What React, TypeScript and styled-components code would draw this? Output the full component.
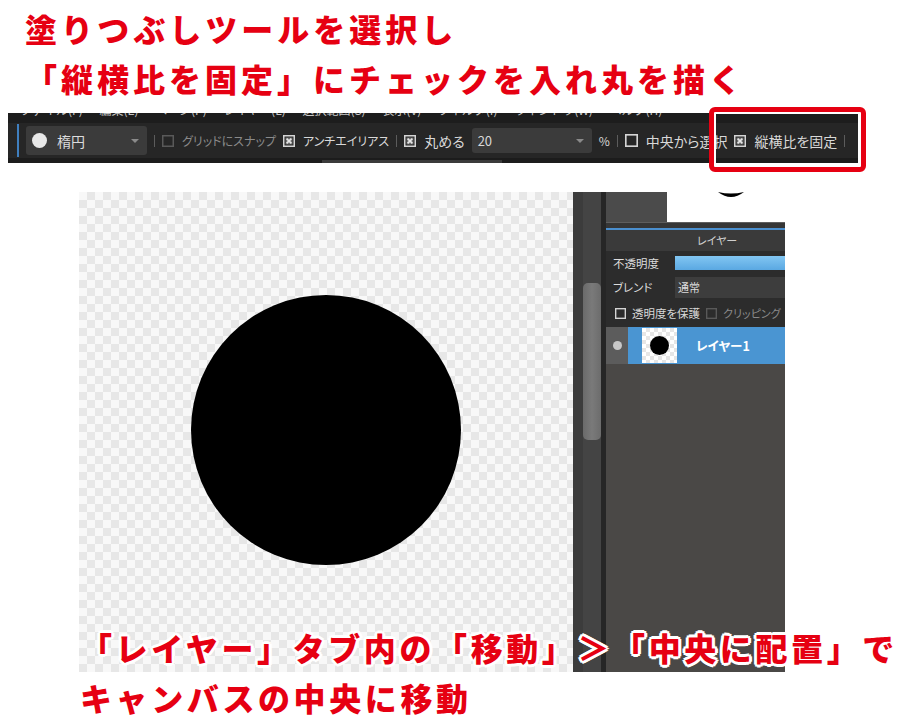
import React from "react";
import styled, { createGlobalStyle } from "styled-components";

const RED = "#e60012";
const UI_FONT = `"Noto Sans CJK JP", "Noto Sans", sans-serif`;

const Global = createGlobalStyle`
  html, body { margin: 0; padding: 0; background: #fff; }
  body { width: 900px; height: 728px; overflow: hidden; font-family: ${UI_FONT}; }
`;

const Page = styled.div`
  position: relative;
  width: 900px;
  height: 728px;
  background: #fff;
  overflow: hidden;
`;

const whiteOutline = `
  text-shadow:
    3px 0 #fff, -3px 0 #fff, 0 3px #fff, 0 -3px #fff,
    2px 2px #fff, -2px -2px #fff, 2px -2px #fff, -2px 2px #fff;
`;

const Heading = styled.div`
  padding: 3px 0 0 25px;
  color: ${RED};
  font-family: ${UI_FONT};
  font-weight: 900;
  font-size: 32px;
  line-height: 50px;
  letter-spacing: 4px;
  white-space: nowrap;
  ${whiteOutline}
`;

const Caption = styled(Heading)`
  position: absolute;
  left: 80px;
  top: 622px;
  padding: 0;
  font-size: 32px;
  letter-spacing: 3.6px;
  line-height: 50px;
`;

/* ---------- toolbar ---------- */

const Toolbar = styled.div`
  margin: 10px 0 0 8px;
  width: 850px;
  height: 50px;
  display: flex;
  flex-direction: column;
  background: #262626;
`;

const MenuStrip = styled.div`
  height: 10px;
  background: #1d1d1d;
  overflow: hidden;
  padding-left: 12px;
`;

const MenuText = styled.div`
  margin-top: -9px;
  font-size: 12px;
  line-height: 12px;
  color: #c8c8c8;
  white-space: nowrap;
  word-spacing: 14px;
`;

const ToolRow = styled.div`
  height: 35px;
  display: flex;
  align-items: center;
  gap: 7px;
  padding-left: 9px;
  font-family: ${UI_FONT};
  font-feature-settings: "palt";
  overflow: hidden;
`;

const BottomStrip = styled.div`
  height: 5px;
  background: #1c1c1c;
  display: flex;
  align-items: flex-end;
`;

const StripThumb = styled.div`
  margin-left: 314px;
  width: 180px;
  height: 3px;
  background: #3b3b3b;
`;

const Accent = styled.div`
  flex: none;
  width: 2px;
  height: 33px;
  background: #3f7fbf;
`;

const Dropdown = styled.div<{ $w: number; $h: number }>`
  flex: none;
  width: ${(p) => p.$w}px;
  height: ${(p) => p.$h}px;
  box-sizing: border-box;
  background: #3b3b3b;
  border-radius: 3px;
  display: flex;
  align-items: center;
  gap: 10px;
  padding: 0 8px 0 6px;
  color: #dcdcdc;
  font-size: 14px;
`;

const Caret = styled.span`
  margin-left: auto;
  width: 0;
  height: 0;
  border-left: 4px solid transparent;
  border-right: 4px solid transparent;
  border-top: 4px solid #8a8a8a;
`;

const WhiteDot = styled.span`
  width: 15px;
  height: 15px;
  border-radius: 50%;
  background: #e8e8e8;
`;

const Sep = styled.span`
  flex: none;
  width: 1px;
  height: 12px;
  background: #5c5c5c;
`;

const Group = styled.div`
  flex: none;
  display: flex;
  align-items: center;
  gap: 8px;
`;

const Label = styled.span<{ $dim?: boolean; $size?: number }>`
  font-size: ${(p) => p.$size ?? 14}px;
  color: ${(p) => (p.$dim ? "#8a8a8a" : "#d8d8d8")};
  white-space: nowrap;
`;

const BoxSvg = styled.svg`
  flex: none;
  display: block;
`;

function CheckBox({ checked, dim, size = 12 }: { checked?: boolean; dim?: boolean; size?: number }) {
  const c = dim ? "#595959" : "#d4d4d4";
  return (
    <BoxSvg width={size} height={size} viewBox="0 0 12 12">
      <rect x="0.75" y="0.75" width="10.5" height="10.5" fill="none" stroke={c} strokeWidth="1.5" />
      {checked && (
        <>
          <rect x="2.5" y="2.5" width="7" height="7" fill="#6a6a6a" />
          <path d="M3.6 3.6 L8.4 8.4 M8.4 3.6 L3.6 8.4" stroke="#e6e6e6" strokeWidth="1.7" />
        </>
      )}
    </BoxSvg>
  );
}

const Highlight = styled.div`
  position: absolute;
  left: 709px;
  top: 107px;
  width: 157px;
  height: 65px;
  box-sizing: border-box;
  border: 5px solid ${RED};
  border-radius: 6px;
  box-shadow: inset 0 0 0 2px #fff;
`;

/* ---------- work area ---------- */

const Work = styled.div`
  display: flex;
  margin: 29px 0 0 79px;
  height: 480px;
`;

const Canvas = styled.div`
  width: 494px;
  background: repeating-conic-gradient(#e7e7e7 0% 25%, #f8f8f8 0% 50%) 0 0 / 16px 16px;
  display: flex;
  align-items: center;
  justify-content: center;
  padding-bottom: 4px;
  box-sizing: border-box;
`;

const Disc = styled.div<{ $d: number }>`
  flex: none;
  width: ${(p) => p.$d}px;
  height: ${(p) => p.$d}px;
  border-radius: 50%;
  background: #000;
`;

const ScrollCol = styled.div`
  width: 33px;
  display: flex;
`;

const ScrollEdge = styled.div`
  width: 10px;
  background: #3c3c3c;
`;

const Track = styled.div`
  width: 18px;
  background: #444444;
  padding-top: 91px;
  box-sizing: border-box;
`;

const Thumb = styled.div`
  height: 157px;
  border-radius: 5px;
  background: linear-gradient(90deg, #6a6a6a, #7a7a7a 50%, #6c6c6c);
`;

const ScrollShade = styled.div`
  width: 5px;
  background: #262626;
`;

const PanelCol = styled.div`
  width: 179px;
  display: flex;
  flex-direction: column;
`;

const TopArea = styled.div`
  height: 30px;
  display: flex;
`;

const GrayTab = styled.div`
  width: 61px;
  background: #4b4b4b;
`;

const Blank = styled.div`
  flex: 1;
  background: #fff;
  padding-left: 51px;
  overflow: hidden;
`;

const ArcSvg = styled.svg`
  display: block;
`;

const LayerPanel = styled.div`
  flex: 1;
  background: #4a4846;
  display: flex;
  flex-direction: column;
  font-family: ${UI_FONT};
  font-feature-settings: "palt";
`;

const PanelTop = styled.div`
  height: 5px;
  border-top: 1px solid #5e5e5e;
  background: #363636;
`;

const BlueLine = styled.div`
  height: 2px;
  background: #4a8fcf;
`;

const PanelHeader = styled.div`
  height: 21px;
  line-height: 21px;
  background: #3a3a3a;
  color: #cfcfcf;
  font-size: 11px;
  padding-left: 91px;
`;

const Props = styled.div`
  background: #2c2c2c;
  display: flex;
  flex-direction: column;
`;

const PropRow = styled.div`
  height: 24px;
  display: flex;
  align-items: center;
  padding-left: 7px;
`;

const PropLabel = styled.span`
  width: 62px;
  flex: none;
  font-size: 11.5px;
  color: #dcdcdc;
`;

const Slider = styled.div`
  flex: 1;
  height: 14px;
  background: linear-gradient(180deg, #82c6f2, #5aa8e2);
`;

const Select = styled.div`
  flex: 1;
  height: 21px;
  line-height: 21px;
  background: #3d3d3d;
  color: #dcdcdc;
  font-size: 11px;
  padding-left: 3px;
`;

const CheckRow = styled.div`
  height: 28px;
  display: flex;
  align-items: center;
  padding-left: 9px;
  gap: 6px;
`;

const LayerRow = styled.div`
  height: 37px;
  display: flex;
`;

const EyeCell = styled.div`
  width: 22px;
  background: #5c5c5c;
  display: flex;
  align-items: center;
  justify-content: center;
`;

const EyeDot = styled.span`
  width: 9px;
  height: 9px;
  border-radius: 50%;
  background: #c8c8c8;
`;

const LayerBody = styled.div`
  flex: 1;
  background: #4a95d2;
  display: flex;
  align-items: center;
  padding-left: 14px;
  gap: 19px;
`;

const LayerThumb = styled.div`
  width: 35px;
  height: 35px;
  background: repeating-conic-gradient(#e6e6e6 0% 25%, #fff 0% 50%) 0 0 / 8px 8px;
  display: flex;
  align-items: center;
  justify-content: center;
`;

const LayerName = styled.span`
  color: #fff;
  font-weight: 700;
  font-size: 12.5px;
`;

export default function App() {
  return (
    <Page>
      <Global />
      <Heading>
        <div>塗りつぶしツールを選択し</div>
        <div>「縦横比を固定」にチェックを入れ丸を描く</div>
      </Heading>

      <Toolbar>
        <MenuStrip>
          <MenuText>ファイル(F) 編集(E) ページ(P) レイヤー(L) 選択範囲(S) 表示(V) フィルタ(I) ウィンドウ(W) ヘルプ(H)</MenuText>
        </MenuStrip>
        <ToolRow>
          <Accent />
          <Dropdown $w={121} $h={29}>
            <WhiteDot />
            <span>楕円</span>
            <Caret />
          </Dropdown>
          <Sep />
          <Group>
            <CheckBox dim />
            <Label $dim $size={12}>グリッドにスナップ</Label>
          </Group>
          <Group>
            <CheckBox checked />
            <Label $size={12}>アンチエイリアス</Label>
          </Group>
          <Sep />
          <Group>
            <CheckBox checked />
            <Label>丸める</Label>
          </Group>
          <Dropdown $w={120} $h={25}>
            <Label $size={13}>20</Label>
            <Caret />
          </Dropdown>
          <Label $size={12}>%</Label>
          <Sep />
          <Group>
            <CheckBox size={13} />
            <Label>中央から選択</Label>
          </Group>
          <Group>
            <CheckBox checked />
            <Label>縦横比を固定</Label>
          </Group>
          <Sep />
        </ToolRow>
        <BottomStrip>
          <StripThumb />
        </BottomStrip>
      </Toolbar>

      <Work>
        <Canvas>
          <Disc $d={270} />
        </Canvas>
        <ScrollCol>
          <ScrollEdge />
          <Track>
            <Thumb />
          </Track>
          <ScrollShade />
        </ScrollCol>
        <PanelCol>
          <TopArea>
            <GrayTab />
            <Blank>
              <ArcSvg width="26" height="5" viewBox="0 0 26 5">
                <path d="M0 0 Q13 10 26 0 Q13 3 0 0 Z" fill="#000" />
              </ArcSvg>
            </Blank>
          </TopArea>
          <LayerPanel>
            <PanelTop />
            <BlueLine />
            <PanelHeader>レイヤー</PanelHeader>
            <Props>
              <PropRow>
                <PropLabel>不透明度</PropLabel>
                <Slider />
              </PropRow>
              <PropRow>
                <PropLabel>ブレンド</PropLabel>
                <Select>通常</Select>
              </PropRow>
              <CheckRow>
                <CheckBox size={11} />
                <Label $size={11.5}>透明度を保護</Label>
                <CheckBox size={11} dim />
                <Label $size={11} $dim>クリッピング</Label>
              </CheckRow>
            </Props>
            <LayerRow>
              <EyeCell>
                <EyeDot />
              </EyeCell>
              <LayerBody>
                <LayerThumb>
                  <Disc $d={19} />
                </LayerThumb>
                <LayerName>レイヤー1</LayerName>
              </LayerBody>
            </LayerRow>
          </LayerPanel>
        </PanelCol>
      </Work>

      <Highlight />

      <Caption>
        <div>「レイヤー」タブ内の「移動」＞「中央に配置」で</div>
        <div>キャンバスの中央に移動</div>
      </Caption>
    </Page>
  );
}
